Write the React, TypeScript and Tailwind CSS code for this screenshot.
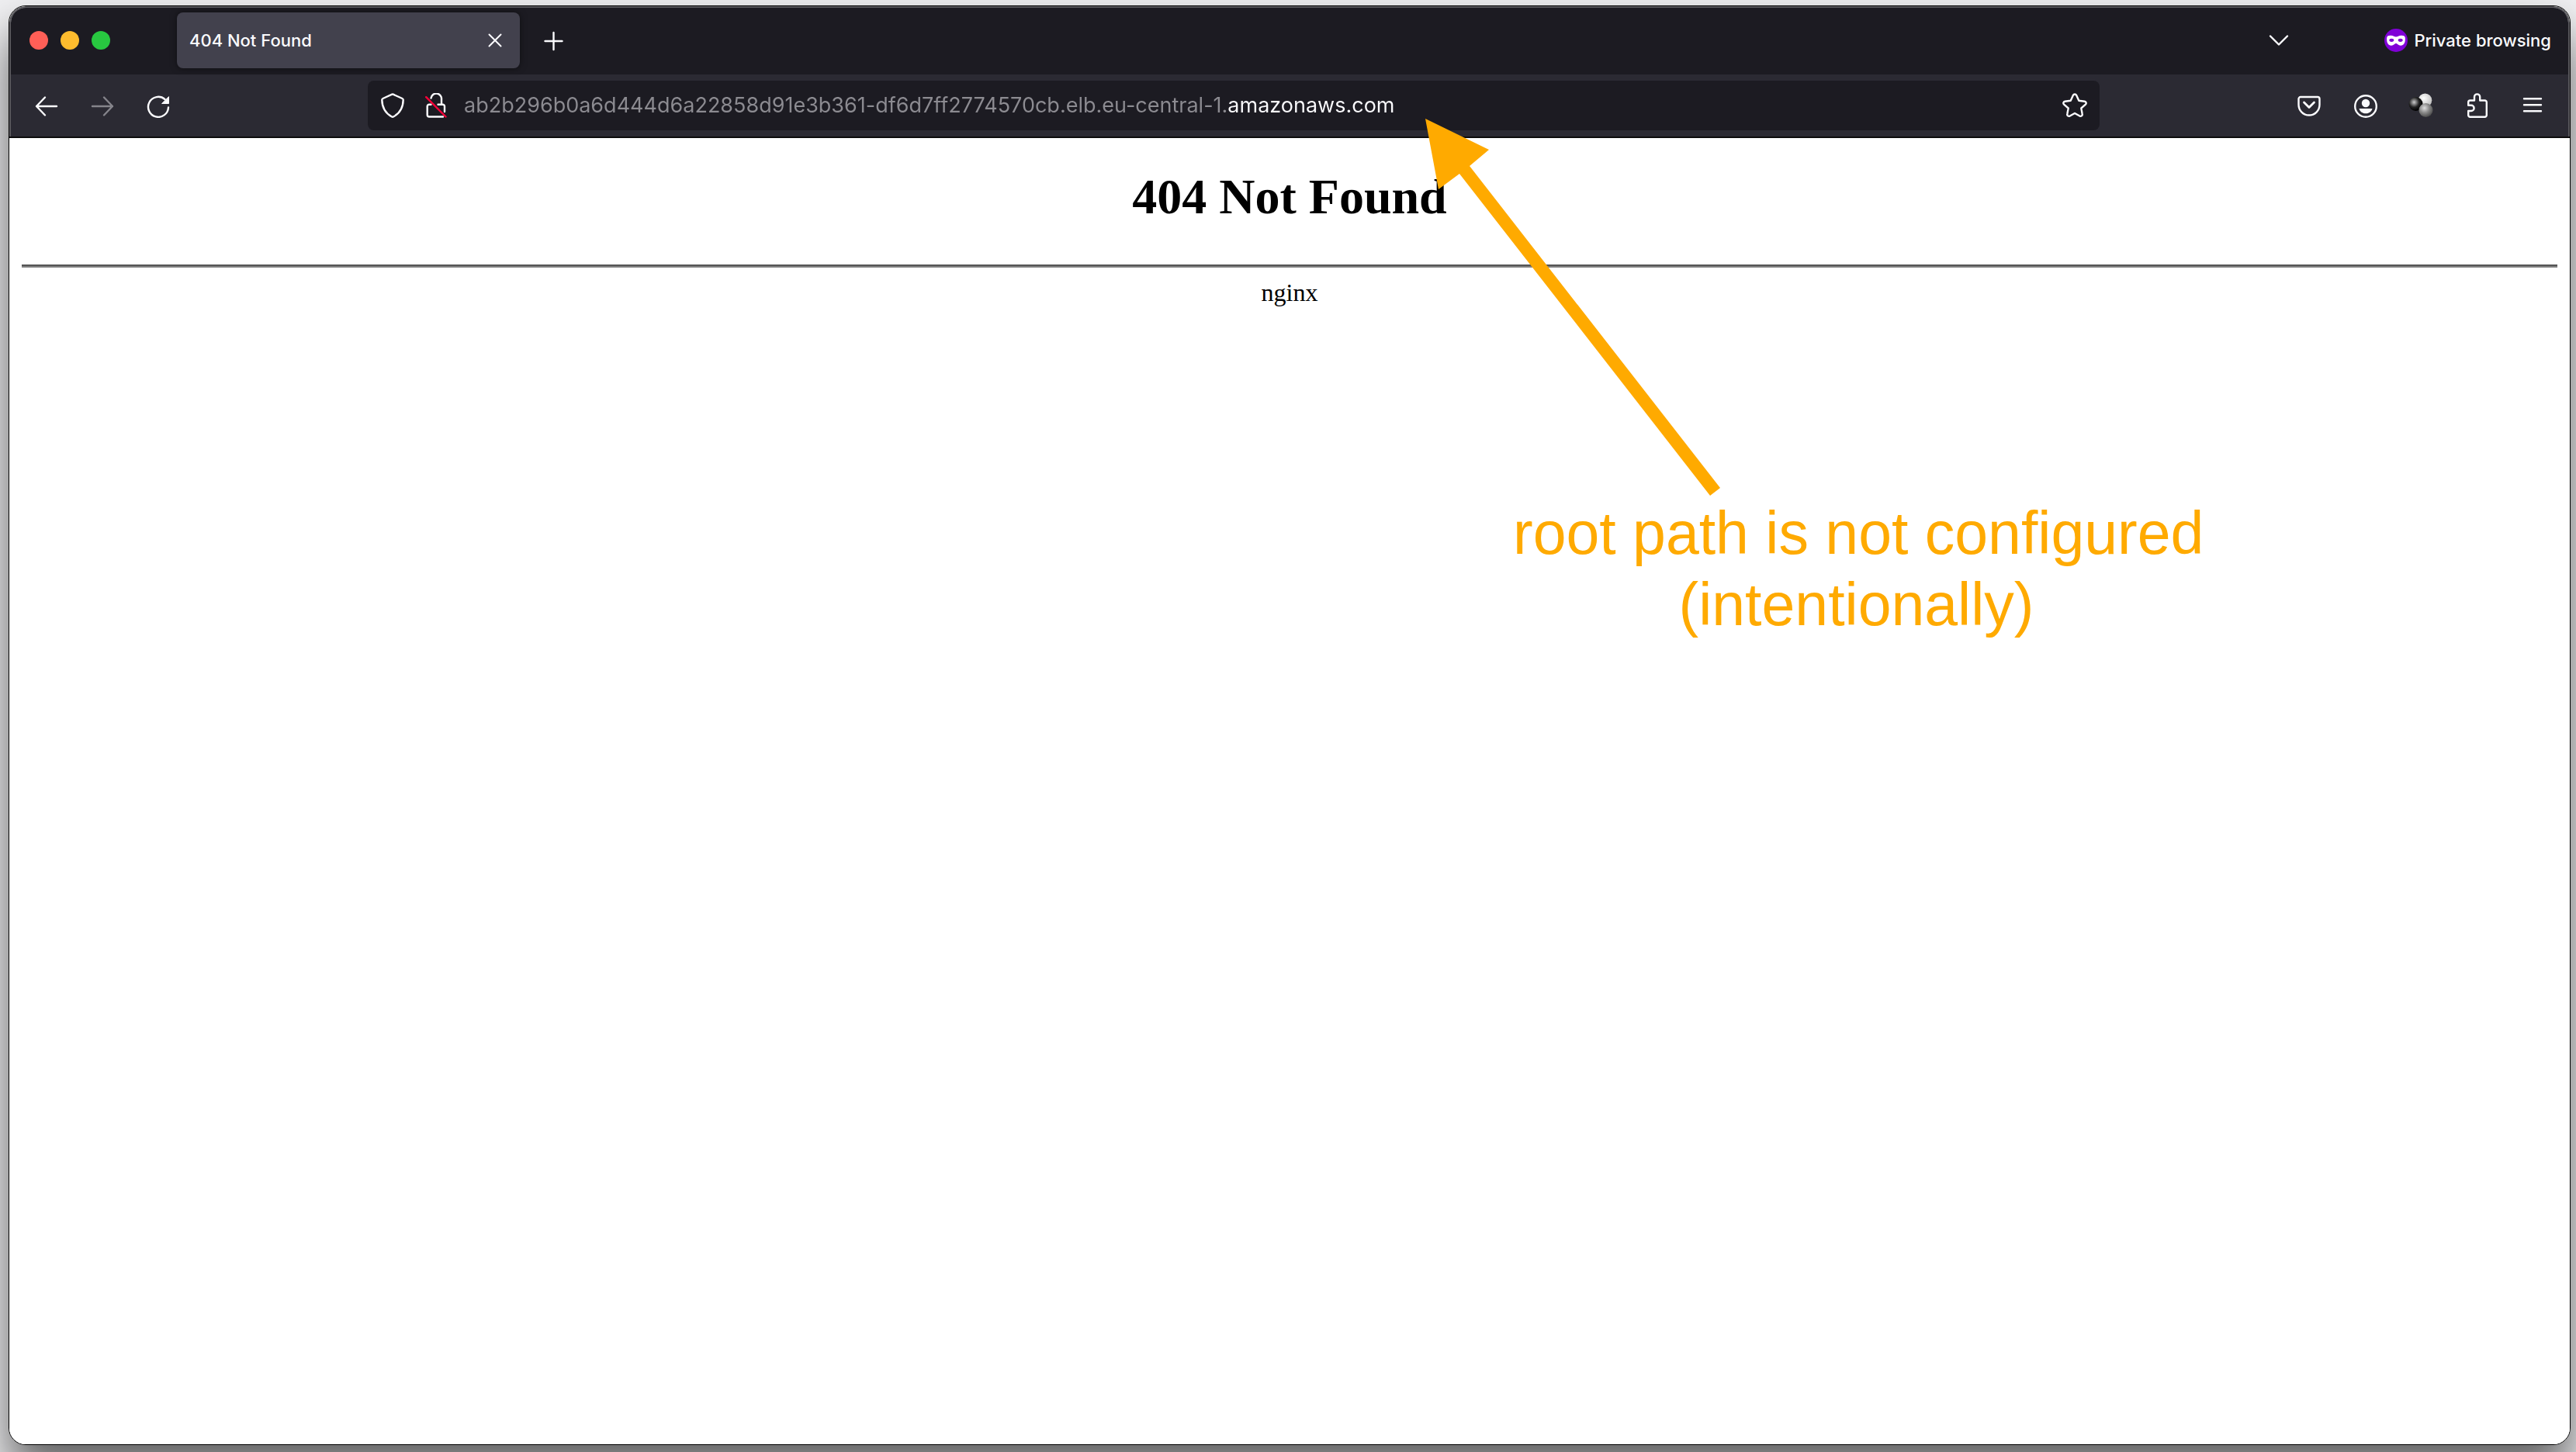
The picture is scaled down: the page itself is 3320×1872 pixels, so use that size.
import React from "react";

const ui = "font-['Inter',sans-serif]";

type IconButtonProps = { label: string; disabled?: boolean; children: React.ReactNode };

function IconButton({ label, disabled, children }: IconButtonProps) {
  return (
    <button
      type="button"
      aria-label={label}
      disabled={disabled}
      className="flex size-8 shrink-0 items-center justify-center text-[#fbfbfe] disabled:text-[#85848b]"
    >
      {children}
    </button>
  );
}

function Icon({ children }: { children: React.ReactNode }) {
  return (
    <svg
      viewBox="0 0 32 32"
      className="size-8"
      fill="none"
      stroke="currentColor"
      strokeWidth="2.4"
      strokeLinecap="round"
      strokeLinejoin="round"
      aria-hidden="true"
    >
      {children}
    </svg>
  );
}

function TabStrip() {
  return (
    <div className="flex h-[86px] items-center bg-[#1c1b22] pr-[22px] pb-0.5 pl-6">
      <div className="flex gap-4">
        <button type="button" aria-label="Close window" className="size-6 rounded-full bg-[#ff5f57]" />
        <button type="button" aria-label="Minimize window" className="size-6 rounded-full bg-[#febc2e]" />
        <button type="button" aria-label="Zoom window" className="size-6 rounded-full bg-[#28c840]" />
      </div>
      <div className="ml-[86px] flex h-[72px] w-[442px] items-center justify-between rounded-lg bg-[#42414d] px-4 shadow-[0_0_8px_rgba(0,0,0,0.5)]">
        <span className={`${ui} text-[22px] font-medium text-[#fbfbfe]`}>404 Not Found</span>
        <IconButton label="Close tab">
          <Icon>
            <path d="M8.500 8.500 23.500 23.500M23.500 8.500 8.500 23.500" strokeWidth="2" />
          </Icon>
        </IconButton>
      </div>
      <div className="ml-7">
        <IconButton label="New tab">
          <Icon>
            <path d="M15.500 6v22M4.500 17h22" />
          </Icon>
        </IconButton>
      </div>
      <div className="ml-auto flex items-center">
        <IconButton label="List all tabs">
          <Icon>
            <path d="M5 10.500 16 21.500 27 10.500" />
          </Icon>
        </IconButton>
        <div className="ml-[120px] flex items-center gap-2">
          <svg viewBox="0 0 30 30" className="size-[30px]" aria-hidden="true">
            <circle cx="15" cy="15" r="15" fill="#8000d7" />
            <path
              d="M3.200 11.500C3.500 9 6 8.600 8.500 8.800c3 .2 4.500 1.700 6.500 1.700s3.500-1.500 6.500-1.700c2.500-.2 5 .2 5.300 2.700.4 4-.3 9.800-5.300 10.200-3.500.3-4.800-2.700-6.500-2.700s-3 3-6.500 2.700c-5-.4-5.700-6.200-5.300-10.200Z"
              fill="#fff"
            />
            <ellipse cx="9.300" cy="14.800" rx="3" ry="2.100" fill="#8000d7" />
            <ellipse cx="20.700" cy="14.800" rx="3" ry="2.100" fill="#8000d7" />
          </svg>
          <span className={`${ui} text-[22px] font-medium text-[#fbfbfe]`}>Private browsing</span>
        </div>
      </div>
    </div>
  );
}

function AddressBar() {
  return (
    <div className="ml-[254px] flex h-16 w-[2232px] items-center rounded-lg bg-[#1c1b22] px-4">
      <IconButton label="Tracking protection">
        <Icon>
          <path d="M15.200 1.700a2 2 0 0 1 1.600 0L28.500 7a2 2 0 0 1 1.200 1.800C29.500 19 25.500 26 17 30.500a2 2 0 0 1-2 0C6.500 26 2.500 19 2.300 8.800A2 2 0 0 1 3.500 7Z" />
        </Icon>
      </IconButton>
      <div className="ml-6">
        <IconButton label="Connection is not secure">
          <Icon>
            <path d="M9.500 6.500A6.800 6.800 0 0 1 23 8.200V14M18.500 14.700h6a2.500 2.500 0 0 1 2.500 2.500V24M9.500 14.700H7.200a2.500 2.500 0 0 0-2.500 2.500V28a2.500 2.500 0 0 0 2.500 2.500H25" />
            <path d="M3.200 5.200 28.500 30.500" stroke="#ff0039" />
          </Icon>
        </IconButton>
      </div>
      <input
        type="text"
        aria-label="Address"
        spellCheck={false}
        defaultValue="ab2b296b0a6d444d6a22858d91e3b361-df6d7ff2774570cb.elb.eu-central-1.amazonaws.com"
        className={`${ui} ml-5 min-w-0 grow bg-linear-to-r from-[#8c8b91] from-[984px] to-[#fbfbfe] to-[984px] bg-clip-text text-[27px] text-transparent caret-white`}
      />
      <IconButton label="Bookmark this page">
        <Icon>
          <path d="M13.900 2.800a2.300 2.300 0 0 1 4.200 0l3.200 7 7.400.9a2.300 2.300 0 0 1 1.200 4L24.300 19.500l1.400 7.500a2.300 2.300 0 0 1-3.400 2.500L16 26l-6.300 3.500a2.300 2.300 0 0 1-3.400-2.500l1.400-7.500-5.600-4.800a2.300 2.300 0 0 1 1.200-4l7.400-.9Z" />
        </Icon>
      </IconButton>
    </div>
  );
}

function Toolbar() {
  return (
    <div className="flex h-20 items-center justify-between bg-[#2b2a33] px-[30px]">
      <div className="flex min-w-0 items-center">
        <div className="flex gap-10">
          <IconButton label="Back">
            <Icon>
              <path d="M3 17h26M14 5.500 3 17l11 11.500" />
            </Icon>
          </IconButton>
          <IconButton label="Forward" disabled>
            <Icon>
              <path d="M3 17h26M18 5.500 29 17 18 28.500" />
            </Icon>
          </IconButton>
          <IconButton label="Reload">
            <Icon>
              <path d="M29 18.500A13 13 0 1 1 24.500 8" />
              <path d="M29.500 5v8.500H21Z" fill="currentColor" strokeWidth="1" />
            </Icon>
          </IconButton>
        </div>
        <AddressBar />
      </div>
      <div className="flex gap-10">
        <IconButton label="Save to Pocket">
          <Icon>
            <path d="M5 5h22a2.500 2.500 0 0 1 2.500 2.500V15a13 13 0 0 1-27 0V7.500A2.500 2.500 0 0 1 5 5Z" />
            <path d="M9.500 12 16 18.500 22.500 12" strokeWidth="2.800" />
          </Icon>
        </IconButton>
        <IconButton label="Account">
          <Icon>
            <circle cx="17" cy="17" r="13.800" />
            <circle cx="17" cy="13" r="5.200" fill="currentColor" stroke="none" />
            <path d="M8.500 20h17c-1 4-4.500 6.300-8.500 6.300S9.500 24 8.500 20Z" fill="currentColor" stroke="none" />
          </Icon>
        </IconButton>
        <IconButton label="Extension">
          <svg viewBox="0 0 32 32" className="size-8" aria-hidden="true">
            <defs>
              <radialGradient id="ballLight" cx=".4" cy=".35" r=".7">
                <stop offset="0" stopColor="#fff" />
                <stop offset="1" stopColor="#bbb" />
              </radialGradient>
              <radialGradient id="ballDark" cx=".38" cy=".38" r=".6">
                <stop offset="0" stopColor="#ccc" />
                <stop offset=".6" stopColor="#222" />
                <stop offset="1" stopColor="#000" />
              </radialGradient>
              <radialGradient id="ballGray" cx=".4" cy=".35" r=".7">
                <stop offset="0" stopColor="#ddd" />
                <stop offset=".5" stopColor="#888" />
                <stop offset="1" stopColor="#444" />
              </radialGradient>
            </defs>
            <circle cx="21.500" cy="9.300" r="8.800" fill="url(#ballLight)" />
            <circle cx="9.500" cy="14" r="9" fill="url(#ballDark)" />
            <circle cx="22.500" cy="22" r="9" fill="url(#ballGray)" />
          </svg>
        </IconButton>
        <IconButton label="Extensions">
          <Icon>
            <path d="M7.500 9.500H13V5a3.600 3.600 0 0 1 7.200 0v4.500H26.500a2.300 2.300 0 0 1 2.300 2.300V28.500a2.300 2.300 0 0 1-2.300 2.300h-19a2.300 2.300 0 0 1-2.300-2.300v-5.500H9a3.600 3.600 0 0 0 0-7.200H5.200V11.800a2.300 2.300 0 0 1 2.300-2.300Z" />
          </Icon>
        </IconButton>
        <IconButton label="Open application menu">
          <Icon>
            <path d="M5 7.200h22M5 15.200h22M5 23.200h22" />
          </Icon>
        </IconButton>
      </div>
    </div>
  );
}

function ErrorPage() {
  return (
    <main className="grow border-t-2 border-[#0c0c0d] bg-white px-4 text-center font-['Liberation_Serif',serif] text-black">
      <h1 className="mt-[39px] text-[64px] leading-[74px] font-bold">404 Not Found</h1>
      <hr className="mt-[50px] h-1 border-t-2 border-b-2 border-t-[#555] border-b-[#808080]" />
      <p className="mt-3.5 text-[32px] leading-[36px]">nginx</p>
    </main>
  );
}

function Annotation() {
  return (
    <div className="absolute top-[153px] left-[1837px] w-[998px] text-[#ffaa00]">
      <svg viewBox="0 0 382 486" className="h-[486px] w-[382px]" aria-hidden="true">
        <path d="M0 0 82 40 57 61 380 476 367 486 44 71 17 91Z" fill="currentColor" />
      </svg>
      <p className="mt-0.5 ml-[113px] text-center font-['Liberation_Sans',sans-serif] text-[77px] leading-[92px] whitespace-nowrap">
        root path is not configured
        <br />
        (intentionally)
      </p>
    </div>
  );
}

export default function App() {
  return (
    <div className="relative flex min-h-screen flex-col overflow-hidden bg-[#f0f0f2] pt-[7px] pr-[7px] pb-[9px] pl-[11px]">
      <div className="flex grow flex-col overflow-hidden rounded-[22px] border border-black bg-white shadow-[0_36px_60px_rgba(0,0,0,0.6)]">
        <header className="overflow-hidden rounded-t-[21px] border-x-2 border-t-2 border-[#58575c]">
          <TabStrip />
          <Toolbar />
        </header>
        <ErrorPage />
      </div>
      <Annotation />
    </div>
  );
}
